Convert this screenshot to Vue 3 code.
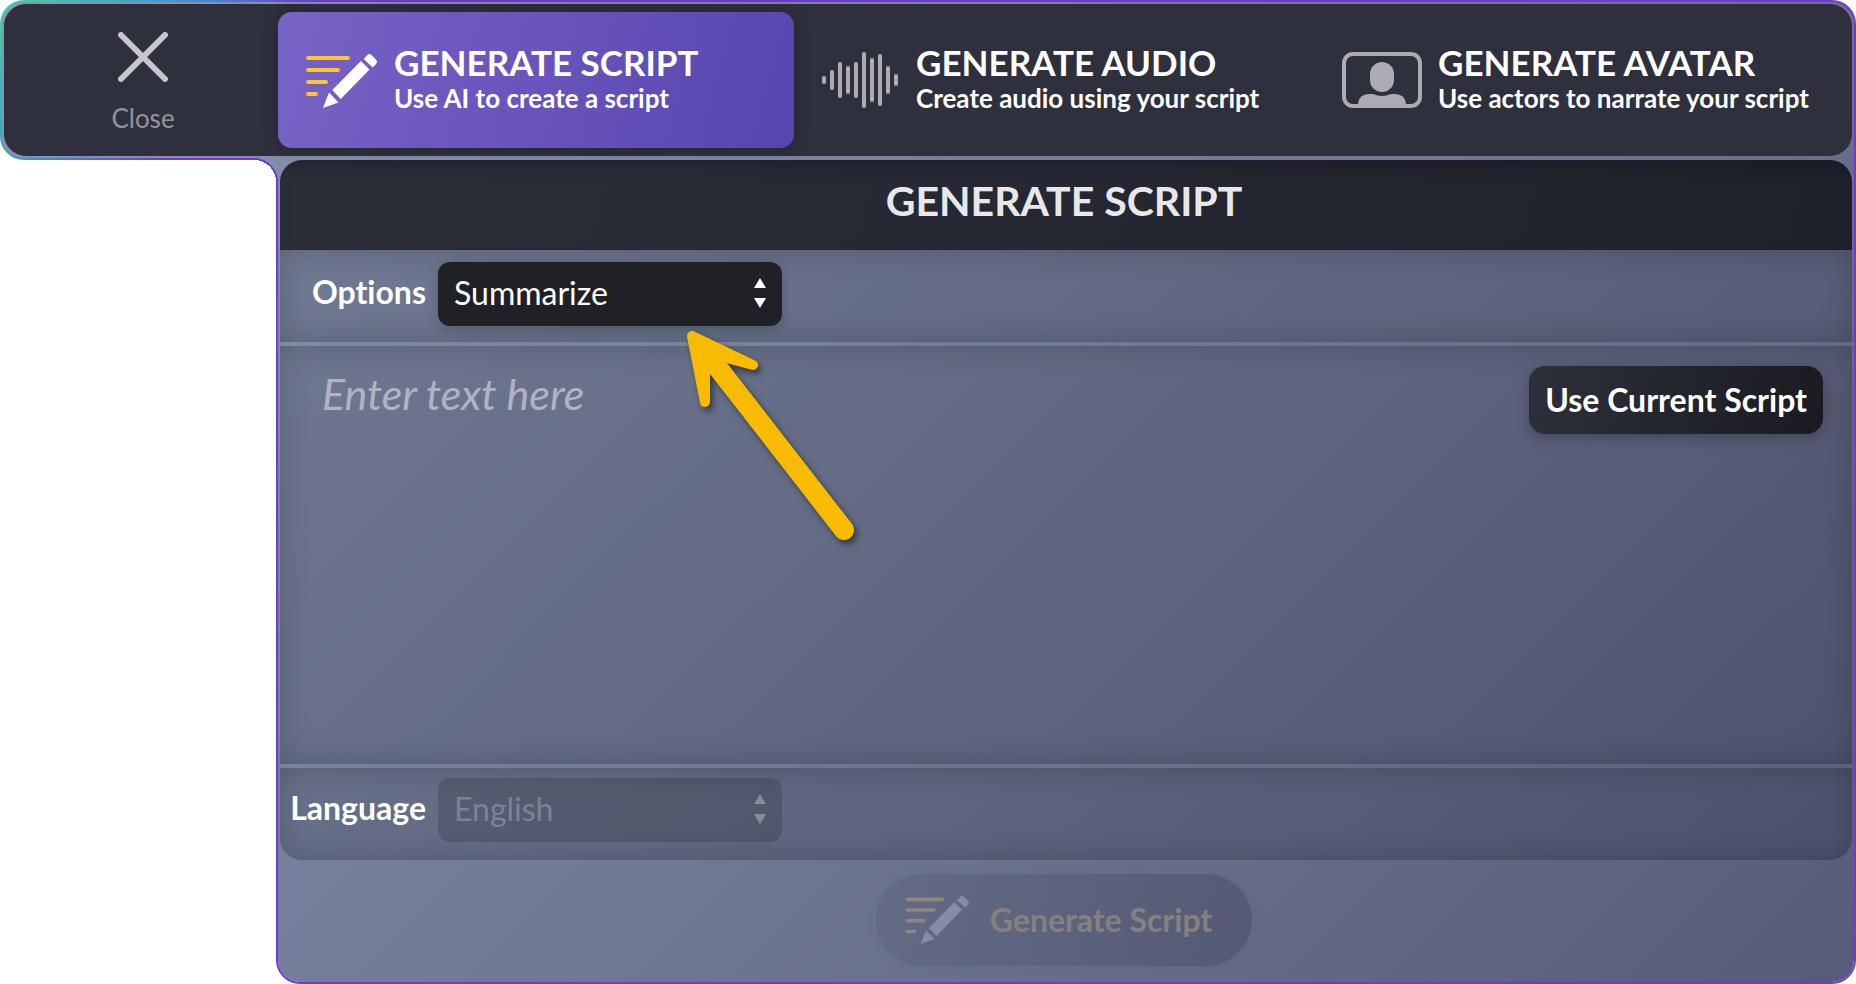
<script setup>
import { ref } from 'vue'

const tabs = [
  { id: 'script', title: 'GENERATE SCRIPT', hint: 'Use AI to create a script' },
  { id: 'audio', title: 'GENERATE AUDIO', hint: 'Create audio using your script' },
  { id: 'avatar', title: 'GENERATE AVATAR', hint: 'Use actors to narrate your script' },
]
const active = ref('script')
const option = ref('Summarize')
const language = ref('English')
const text = ref('')

// Waveform bars: half of each bar's height, from left to right
const wave = [4, 10, 18, 14, 18, 28, 22, 26, 14, 6]
</script>

<template>
  <div class="window">
    <header class="top">
      <nav class="bar">
        <button class="close" type="button">
          <svg width="50" height="50" viewBox="0 0 50 50" aria-hidden="true">
            <path d="M3 3L47 47M47 3L3 47" />
          </svg>
          <span>Close</span>
        </button>
        <div class="tabs">
          <button
            v-for="tab in tabs"
            :key="tab.id"
            type="button"
            class="tab"
            :class="{ active: active === tab.id }"
            @click="active = tab.id"
          >
            <svg v-if="tab.id === 'script'" class="icon" width="80" height="56" viewBox="0 0 80 56" aria-hidden="true">
              <path class="lines" d="M10 6H50M10 18H40M10 30H28M10 42H18" />
              <path class="pen" d="M25 56L31 40.500L40.500 50.500ZM34.300 38L63 9L71.500 17.500L42.700 47ZM65.700 7L69 3.500Q71 1 73.500 3L78 7.500Q80 10 78 12L74.700 15.500Z" />
            </svg>
            <svg v-else-if="tab.id === 'audio'" class="icon" width="80" height="56" viewBox="0 0 80 56" aria-hidden="true">
              <rect
                v-for="(half, i) in wave"
                :key="i"
                :x="2 + i * 8"
                :y="28 - half"
                width="4"
                :height="half * 2"
                rx="2"
                class="muted"
              />
            </svg>
            <svg v-else class="icon" width="80" height="56" viewBox="0 0 80 56" aria-hidden="true">
              <rect x="2" y="2" width="76" height="52" rx="9" class="frame" />
              <rect x="28" y="10" width="24" height="30" rx="12" class="muted" />
              <path class="muted" d="M16 54V52Q17 42 27 42H31Q40 46 49 42H53Q63 42 64 52V54Z" />
            </svg>
            <span class="words">
              <strong>{{ tab.title }}</strong>
              <span>{{ tab.hint }}</span>
            </span>
          </button>
        </div>
      </nav>
    </header>

    <main class="body">
      <section class="panel">
        <h1>GENERATE SCRIPT</h1>

        <div class="row options">
          <label for="option">Options</label>
          <div class="picker">
            <select id="option" v-model="option">
              <option>Summarize</option>
            </select>
            <svg width="12" height="30" viewBox="0 0 12 30" aria-hidden="true">
              <path d="M6 0L12 10H0ZM0 20H12L6 30Z" />
            </svg>
          </div>
        </div>

        <div class="row editor">
          <textarea v-model="text" placeholder="Enter text here" aria-label="Text"></textarea>
          <button class="current" type="button">Use Current Script</button>
        </div>

        <div class="row language">
          <label for="language">Language</label>
          <div class="picker off">
            <select id="language" v-model="language" disabled>
              <option>English</option>
            </select>
            <svg width="12" height="30" viewBox="0 0 12 30" aria-hidden="true">
              <path d="M6 0L12 10H0ZM0 20H12L6 30Z" />
            </svg>
          </div>
        </div>
      </section>

      <footer>
        <button class="generate" type="button" disabled>
          <svg width="72" height="50" viewBox="0 0 80 56" aria-hidden="true">
            <path class="lines" d="M10 6H50M10 18H40M10 30H28M10 42H18" />
            <path class="pen" d="M25 56L31 40.500L40.500 50.500ZM34.300 38L63 9L71.500 17.500L42.700 47ZM65.700 7L69 3.500Q71 1 73.500 3L78 7.500Q80 10 78 12L74.700 15.500Z" />
          </svg>
          <span>Generate Script</span>
        </button>
      </footer>

      <svg class="pointer" width="190" height="230" viewBox="680 324 190 230" aria-hidden="true">
        <path class="head" d="M692 336L753 365L719 356L705 364L705 402Z" />
        <path class="shaft" d="M708 355L844 530" />
      </svg>
    </main>
  </div>
</template>

<style>
body {
  margin: 0;
  background: #fff;
}
</style>

<style scoped>
.window {
  --steel: linear-gradient(135deg, #8a95b0, #76809c 40%, #676f8b 70%, #565b79);
  --violet: #7038d6;
  box-sizing: border-box;
  min-height: 100vh;
  display: flex;
  flex-direction: column;
  font-family: Lato, "Open Sans", sans-serif;
  font-variant-ligatures: none;
  color: #fff;
}
button,
select,
textarea {
  font: inherit;
  font-variant-ligatures: none;
  color: inherit;
  border: 0;
  margin: 0;
}
button {
  cursor: pointer;
}

/* Top bar */
.top {
  padding: 4px;
  border-radius: 24px 24px 0 24px;
  background: linear-gradient(135deg, #3ad39b 10px, #3a9bdc 120px, var(--violet) 230px);
  position: relative;
}
.top::before {
  content: "";
  position: absolute;
  inset: 2px;
  border-radius: 22px 22px 0 22px;
  background: var(--steel) fixed;
}
.bar {
  position: relative;
  display: flex;
  box-sizing: border-box;
  padding: 8px 14px 8px 0;
  background: #2f303d;
  border-radius: 22px;
}
.close {
  width: 274px;
  flex: none;
  padding: 20px 0 0 4px;
  background: none;
  display: flex;
  flex-direction: column;
  align-items: center;
  gap: 20px;
  font-size: 26px;
  line-height: 32px;
  color: #94959b;
}
.close path {
  fill: none;
  stroke: #c5c6c9;
  stroke-width: 6;
  stroke-linecap: round;
}
.tabs {
  flex: 1;
  display: grid;
  grid-template-columns: repeat(3, 1fr);
  gap: 6px;
}
.tab {
  height: 136px;
  min-width: 0;
  padding: 0 20px;
  display: flex;
  align-items: center;
  gap: 16px;
  text-align: left;
  white-space: nowrap;
  background: none;
  border-radius: 14px;
}
.tab.active {
  background: linear-gradient(105deg, #7864c6, #5844af);
  box-shadow: 0 0 16px rgba(0, 0, 0, 0.25);
}
.icon {
  flex: none;
  overflow: visible;
}
.lines {
  fill: none;
  stroke: #ffc531;
  stroke-width: 4;
  stroke-linecap: round;
}
.pen {
  fill: #fff;
}
.muted {
  fill: #abacb1;
}
.frame {
  fill: none;
  stroke: #abacb1;
  stroke-width: 4;
}
.words {
  display: flex;
  flex-direction: column;
  padding-bottom: 4px;
  font-size: 26px;
  font-weight: 700;
  line-height: 32px;
}
.words strong {
  font-size: 35px;
  font-weight: 700;
  line-height: 40px;
}

/* Body */
.body {
  position: relative;
  flex: 1;
  display: flex;
  flex-direction: column;
  box-sizing: border-box;
  margin: -2px 0 0 276px;
  padding: 2px 2px 0;
  border: 2px solid var(--violet);
  border-top: 0;
  border-radius: 0 0 24px 24px;
  background: var(--steel) fixed padding-box;
}
/* Concave corner where the bar meets the body */
.body::before {
  content: "";
  position: absolute;
  top: 0;
  left: -24px;
  width: 24px;
  height: 24px;
  background: radial-gradient(circle at 0 100%, #fff 22px, var(--violet) 22px 24px, #838da9 24px);
}
.panel {
  flex: 1;
  display: flex;
  flex-direction: column;
  overflow: hidden;
  border-radius: 22px;
}
h1 {
  margin: 0;
  padding: 17px 4px 25px 0;
  font-size: 41px;
  font-weight: 700;
  line-height: 48px;
  text-align: center;
  color: #e8e8ea;
  background: linear-gradient(105deg, #2b2e39, #1f212b);
  box-shadow: inset 0 10px 20px -8px rgba(0, 0, 0, 0.3);
}
.row {
  display: flex;
  gap: 12px;
  background: rgba(0, 0, 0, 0.13);
  box-shadow: inset 0 0 30px rgba(0, 0, 0, 0.2);
  font-size: 32px;
}
.options {
  padding: 12px 0 16px;
}
.language {
  padding: 10px 0 18px;
}
label {
  width: 146px;
  line-height: 60px;
  font-weight: 700;
  text-align: right;
}
.picker {
  position: relative;
  width: 344px;
}
select {
  appearance: none;
  width: 100%;
  height: 64px;
  padding: 0 50px 4px 16px;
  border-radius: 12px;
  background: #1f2127;
  box-shadow: 0 4px 12px rgba(0, 0, 0, 0.2);
  opacity: 1;
}
.picker svg {
  position: absolute;
  right: 16px;
  top: 16px;
  fill: #fff;
  pointer-events: none;
}
.off select {
  color: #7c8296;
  background: rgba(30, 34, 40, 0.22);
  box-shadow: none;
}
.off svg {
  fill: #858a9c;
}
.editor {
  flex: 1;
  margin: 4px 0;
  align-items: flex-start;
  padding-right: 29px;
}
textarea {
  flex: 1;
  min-width: 0;
  align-self: stretch;
  padding: 24px 0 24px 42px;
  background: none;
  outline: 0;
  resize: none;
  font-size: 43px;
  line-height: 48px;
}
textarea::placeholder {
  font-style: italic;
  color: #b0b4c2;
  opacity: 1;
}
.current {
  margin-top: 20px;
  height: 68px;
  padding: 0 16px 2px;
  border-radius: 16px;
  font-weight: 700;
  background: linear-gradient(105deg, #2d303b, #1a1b20);
  box-shadow: 0 4px 14px rgba(0, 0, 0, 0.25);
}
footer {
  display: flex;
  justify-content: center;
  padding: 14px 4px 16px 0;
}
.generate {
  height: 92px;
  padding: 0 40px 2px 22px;
  display: flex;
  align-items: center;
  gap: 20px;
  border-radius: 46px;
  background: linear-gradient(105deg, #636b85, #555a74);
  box-shadow: 0 0 16px rgba(0, 0, 0, 0.04);
  font-size: 32px;
  font-weight: 700;
  color: #86817f;
}
.generate .lines {
  stroke: #8f8683;
}
.generate .pen {
  fill: #868ca6;
}

/* Callout arrow over the page */
.pointer {
  position: absolute;
  left: 402px;
  top: 166px;
  pointer-events: none;
  filter: drop-shadow(3px 4px 3px rgba(0, 0, 0, 0.5));
}
.head {
  fill: #f9bb00;
  stroke: #f9bb00;
  stroke-width: 10;
  stroke-linejoin: round;
}
.shaft {
  fill: none;
  stroke: #f9bb00;
  stroke-width: 20;
  stroke-linecap: round;
}
</style>
